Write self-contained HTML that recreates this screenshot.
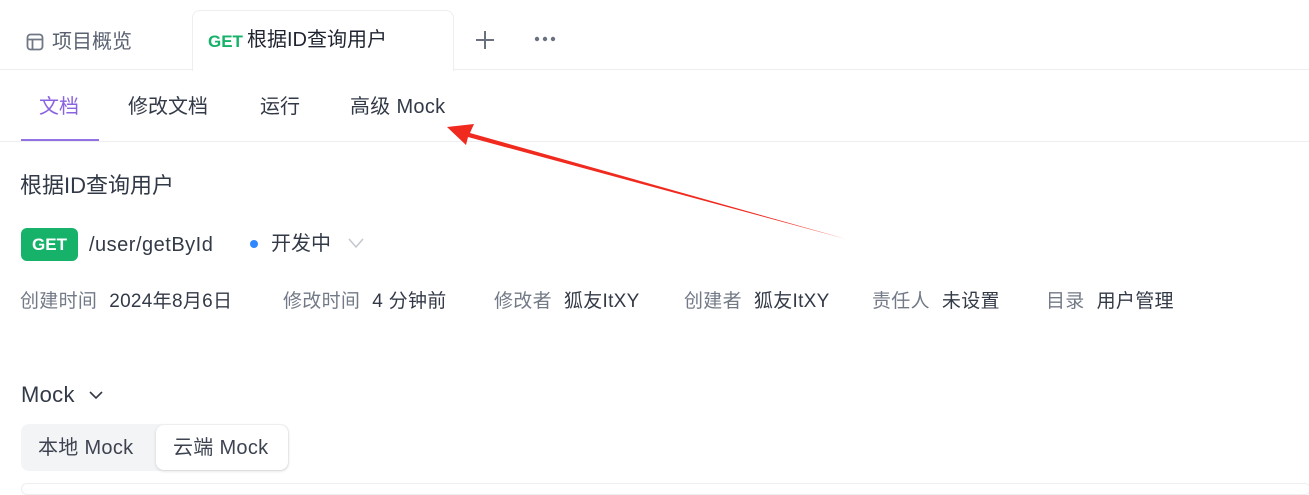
<!DOCTYPE html>
<html><head><meta charset="utf-8"><style>
body{margin:0;width:1309px;height:490px;background:#fff;position:relative;overflow:hidden;font-family:"Liberation Sans","Noto Sans CJK SC",sans-serif;color:#333a47}
.a{position:absolute;white-space:nowrap;line-height:1}
.top{position:absolute;left:0;top:0;width:1309px;height:69px;border-bottom:1px solid #eceef2;background:#fff}
.tab{position:absolute;left:192px;top:10px;width:260px;height:60px;border:1px solid #eceef2;border-bottom:none;border-radius:8px 8px 0 0;background:#fff}
.meta{font-size:19px;color:#737a87;letter-spacing:0.3px}
.meta b{font-weight:normal;color:#333a47;margin-left:12px}
</style></head><body>
<div class="top"></div>
<div class="tab"></div>
<svg class="a" style="left:26px;top:33px" width="18" height="18" viewBox="0 0 18 18"><rect x="1.5" y="1.5" width="15" height="15" rx="3" fill="none" stroke="#717885" stroke-width="1.8"/><path d="M1.5 6.5H16.5M6.5 6.5V16.5" stroke="#717885" stroke-width="1.8"/></svg>
<div class="a" style="left:52px;top:32px;font-size:20px;color:#5a6170">项目概览</div>
<div class="a" style="left:208px;top:33px;font-size:17px;font-weight:bold;color:#17b26a">GET</div>
<div class="a" style="left:247px;top:30px;font-size:20px;color:#1f2430">根据ID查询用户</div>
<svg class="a" style="left:475px;top:30px" width="20" height="20"><path d="M10 1V19M1 10H19" stroke="#6a7180" stroke-width="2"/></svg>
<svg class="a" style="left:534px;top:36px" width="22" height="6"><circle cx="3" cy="3" r="2.2" fill="#6a7180"/><circle cx="11" cy="3" r="2.2" fill="#6a7180"/><circle cx="19" cy="3" r="2.2" fill="#6a7180"/></svg>
<div class="a" style="left:39px;top:97px;font-size:20px;color:#8a63e0">文档</div>
<div class="a" style="left:21px;top:139px;width:78px;height:3px;background:#9373e3"></div>
<div class="a" style="left:0;top:141px;width:1309px;height:1px;background:#eceef2"></div>
<div class="a" style="left:128px;top:97px;font-size:20px">修改文档</div>
<div class="a" style="left:260px;top:97px;font-size:20px">运行</div>
<div class="a" style="left:350px;top:97px;font-size:20px;letter-spacing:0.3px">高级 Mock</div>
<div class="a" style="left:20px;top:175px;font-size:22px">根据ID查询用户</div>
<div class="a" style="left:21px;top:228px;width:57px;height:33px;border-radius:6px;background:#17b26a;color:#fff;font-weight:bold;font-size:17px;line-height:33px;text-align:center">GET</div>
<div class="a" style="left:89px;top:235px;font-size:20px;letter-spacing:0.5px">/user/getById</div>
<div class="a" style="left:250px;top:240px;width:8px;height:8px;border-radius:50%;background:#2f88ff"></div>
<div class="a" style="left:271px;top:234px;font-size:20px">开发中</div>
<svg class="a" style="left:348px;top:237px" width="16" height="12"><path d="M1 2l7 8 7-8" fill="none" stroke="#c4c7ce" stroke-width="1.5"/></svg>
<div class="a meta" style="left:20px;top:292px">创建时间<b>2024年8月6日</b></div>
<div class="a meta" style="left:283px;top:292px">修改时间<b>4 分钟前</b></div>
<div class="a meta" style="left:494px;top:292px">修改者<b>狐友ItXY</b></div>
<div class="a meta" style="left:684px;top:292px">创建者<b>狐友ItXY</b></div>
<div class="a meta" style="left:872px;top:292px">责任人<b>未设置</b></div>
<div class="a meta" style="left:1046px;top:292px">目录<b>用户管理</b></div>
<div class="a" style="left:21px;top:384px;font-size:22px;letter-spacing:0.3px">Mock</div>
<svg class="a" style="left:88px;top:389px" width="16" height="12"><path d="M2 3l6 6 6-6" fill="none" stroke="#333a47" stroke-width="1.6"/></svg>
<div class="a" style="left:21px;top:424px;width:268px;height:47px;border-radius:8px;background:#f3f4f6"></div>
<div class="a" style="left:156px;top:425px;width:132px;height:45px;border-radius:8px;background:#fff;box-shadow:0 1px 3px rgba(0,0,0,.15)"></div>
<div class="a" style="left:38px;top:438px;font-size:20px;color:#3d4350;letter-spacing:0.3px">本地 Mock</div>
<div class="a" style="left:173px;top:438px;font-size:20px;color:#3d4350;letter-spacing:0.3px">云端 Mock</div>
<div class="a" style="left:21px;top:483px;width:1288px;height:10px;border:1px solid #eceef2;border-radius:8px"></div>
<svg class="a" style="left:0;top:0" width="1309" height="490"><path d="M846 239 L470 133 L474 124 L447 127 L466 145 L468 137 Z" fill="#f02a1e"/></svg>
</body></html>
